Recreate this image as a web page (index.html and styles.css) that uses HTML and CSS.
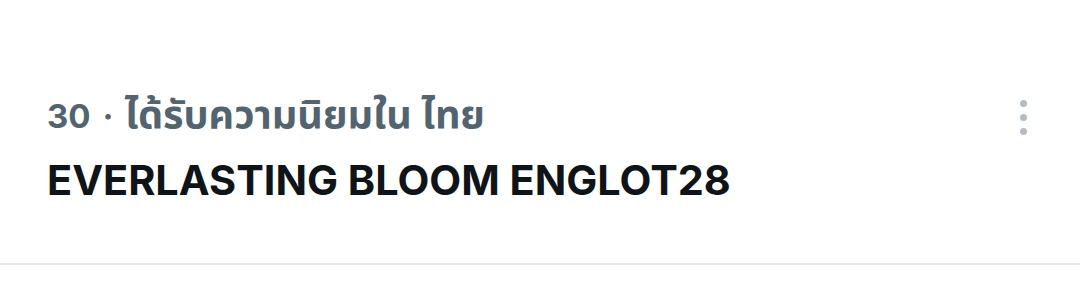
FILE: index.html
```html
<!DOCTYPE html>
<html lang="th">
<head>
<meta charset="utf-8">
<link rel="stylesheet" href="styles.css">
</head>
<body>
<div class="trend">
  <div class="trend-text">
    <div class="meta">30<span class="sep">·</span><span class="thai">ได้รับความนิยมใน ไทย</span></div>
    <div class="title">EVERLASTING BLOOM ENGLOT28</div>
  </div>
  <button class="more" aria-label="More">
    <span class="dot"></span><span class="dot"></span><span class="dot"></span>
  </button>
</div>
</body>
</html>
```
FILE: styles.css
```css
html, body {
  margin: 0;
  padding: 0;
  background: #fff;
}
body {
  width: 1080px;
  height: 307px;
  overflow: hidden;
  font-family: Inter, "Noto Sans Thai", "Noto Sans", sans-serif;
}
.trend {
  display: flex;
  justify-content: space-between;
  align-items: flex-start;
  padding: 92px 0 0 47px;
  height: 171px;
  border-bottom: 2px solid #e7e7e7;
}
.meta {
  color: #536471;
  font-size: 33px;
  font-weight: 700;
  line-height: 48px;
  white-space: nowrap;
}
.sep {
  margin: 0 11px 0 12px;
}
.thai {
  font-size: 39.6px;
  font-weight: 700;
  line-height: 1;
}
.title {
  color: #0f1419;
  font-size: 41.4px;
  font-weight: 700;
  line-height: 52px;
  margin-top: 14px;
}
.more {
  display: flex;
  flex-direction: column;
  gap: 7px;
  background: none;
  border: 0;
  padding: 0;
  margin: 8px 53px 0 0;
}
.dot {
  width: 7px;
  height: 7px;
  border-radius: 50%;
  background: #b3bcc4;
}
```
